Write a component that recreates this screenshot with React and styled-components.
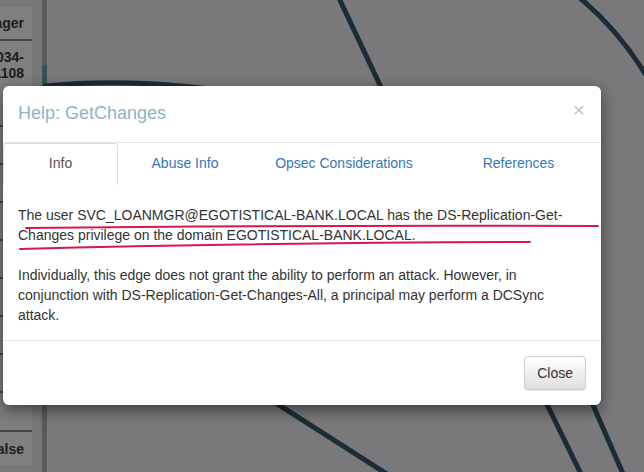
import React from 'react';
import styled, { createGlobalStyle } from 'styled-components';

const GlobalStyle = createGlobalStyle`
  html, body {
    margin: 0;
    padding: 0;
  }
  body {
    font-family: "Liberation Sans", Arial, sans-serif;
    font-size: 14px;
    line-height: 1.42857;
    color: #333;
  }
`;

// Page behind the modal
const Page = styled.div`
  position: relative;
  width: 644px;
  height: 472px;
  overflow: hidden;
  background: #f2f2f6;
  display: flex;
`;

const SidePanel = styled.div`
  width: 42px;
  flex-shrink: 0;
  background: #eeeeee;
  padding-top: 7px;
  box-sizing: border-box;
`;

const Cell = styled.div`
  width: 32px;
  height: ${(p) => p.h}px;
  padding-right: 8px;
  background: #fefefe;
  border-bottom: ${(p) => (p.line ? '2px solid #8a8a8a' : 'none')};
  box-sizing: border-box;
  overflow: hidden;
  display: flex;
  flex-direction: column;
  justify-content: center;
  font-weight: bold;
  font-size: 14px;
  color: #3a3a3a;
  line-height: 16px;
`;

const CellLine = styled.div`
  display: flex;
  justify-content: flex-end;
  white-space: nowrap;
`;

const Scrollbar = styled.div`
  width: 5px;
  flex-shrink: 0;
  background: linear-gradient(to bottom, #b4b4b4 0, #b4b4b4 65px, #6fa6a6 65px, #6fa6a6 84px, #b4b4b4 84px);
`;

const Canvas = styled.div`
  position: relative;
  flex: 1;
`;

const GraphSvg = styled.svg`
  position: absolute;
  left: -47px;
  top: 0;
  width: 644px;
  height: 472px;
`;

// Modal
const Backdrop = styled.div`
  position: absolute;
  inset: 0;
  background: rgba(0, 0, 0, 0.5);
`;

const Modal = styled.div`
  position: absolute;
  left: 3px;
  top: 86px;
  width: 598px;
  background: #fff;
  border-radius: 6px;
  box-shadow: 0 5px 15px rgba(0, 0, 0, 0.5);
  overflow: hidden;
`;

const Header = styled.div`
  padding: 15px;
  border-bottom: 1px solid #e5e5e5;
  display: flex;
  justify-content: space-between;
  align-items: flex-start;
`;

const Title = styled.h4`
  margin: 0;
  font-size: 18px;
  font-weight: 500;
  line-height: 1.42857;
  color: #8cb4c9;
`;

const CloseX = styled.span`
  font-size: 21px;
  font-weight: normal;
  line-height: 1;
  color: #c4c4c4;
  margin-top: -2px;
  margin-right: 1px;
`;

const Tabs = styled.div`
  display: grid;
  grid-template-columns: 115px 134px 184px 1fr;
  border-bottom: 1px solid #ddd;
`;

const Tab = styled.div`
  padding: 9px 15px 11px;
  line-height: 20px;
  text-align: center;
  margin-bottom: -1px;
  color: ${(p) => (p.active ? '#555' : '#337ab7')};
  background: #fff;
  border: 1px solid ${(p) => (p.active ? '#ddd' : 'transparent')};
  border-bottom-color: ${(p) => (p.active ? '#fff' : 'transparent')};
  border-radius: 4px 4px 0 0;
`;

const Body = styled.div`
  position: relative;
  padding: 20px 15px 15px;
`;

const Para = styled.p`
  margin: 0 0 20px;
  line-height: 20px;

  &:last-of-type {
    margin-bottom: 0;
  }
`;

const Marks = styled.svg`
  position: absolute;
  left: -3px;
  top: -184px;
  width: 644px;
  height: 472px;
  pointer-events: none;
`;

const Footer = styled.div`
  padding: 15px;
  border-top: 1px solid #e5e5e5;
  display: flex;
  justify-content: flex-end;
`;

const Button = styled.button`
  font-family: inherit;
  font-size: 14px;
  line-height: 20px;
  padding: 6px 12px;
  color: #333;
  border: 1px solid #ccc;
  border-radius: 4px;
  background-image: linear-gradient(to bottom, #fff 0, #e0e0e0 100%);
  box-shadow: inset 0 1px 0 rgba(255, 255, 255, 0.15), 0 1px 1px rgba(0, 0, 0, 0.075);
`;

const tabs = ['Info', 'Abuse Info', 'Opsec Considerations', 'References'];
const middleRows = [38, 38, 38, 38, 38, 38, 38, 38, 39];

export default function App() {
  return (
    <>
      <GlobalStyle />
      <Page>
        <SidePanel>
          <Cell h={34} line>
            <CellLine>Manager</CellLine>
          </Cell>
          <Cell h={48}>
            <CellLine>S-1-5-21-2966785786-3096785034-</CellLine>
            <CellLine>1108</CellLine>
          </Cell>
          {middleRows.map((h, i) => (
            <Cell key={i} h={h} line />
          ))}
          <Cell h={33}>
            <CellLine>False</CellLine>
          </Cell>
        </SidePanel>
        <Scrollbar />
        <Canvas>
          <GraphSvg viewBox="0 0 644 472">
            <g fill="none" stroke="#36586c" strokeWidth="5" strokeLinecap="round">
              <path d="M338 -4 L420 170" />
              <path d="M575 -6 Q620 30 650 82" />
              <path d="M45 86 Q140 76 260 96" />
              <path d="M240 380 L390 476" />
              <path d="M535 380 L582 476" />
              <path d="M582 380 L624 476" />
            </g>
          </GraphSvg>
        </Canvas>
        <Backdrop />
        <Modal>
          <Header>
            <Title>Help: GetChanges</Title>
            <CloseX>×</CloseX>
          </Header>
          <Tabs>
            {tabs.map((t, i) => (
              <Tab key={t} active={i === 0}>
                {t}
              </Tab>
            ))}
          </Tabs>
          <Body>
            <Para>
              The user SVC_LOANMGR@EGOTISTICAL-BANK.LOCAL has the DS-Replication-Get-Changes
              privilege on the domain EGOTISTICAL-BANK.LOCAL.
            </Para>
            <Para>
              Individually, this edge does not grant the ability to perform an attack. However, in
              conjunction with DS-Replication-Get-Changes-All, a principal may perform a DCSync
              attack.
            </Para>
            <Marks viewBox="0 0 644 472">
              <g fill="none" stroke="#d8174f" strokeWidth="2" strokeLinecap="round">
                <path d="M26 227 Q300 224 598 225" />
                <path d="M20 248 Q250 242 530 241" />
              </g>
            </Marks>
          </Body>
          <Footer>
            <Button>Close</Button>
          </Footer>
        </Modal>
      </Page>
    </>
  );
}
